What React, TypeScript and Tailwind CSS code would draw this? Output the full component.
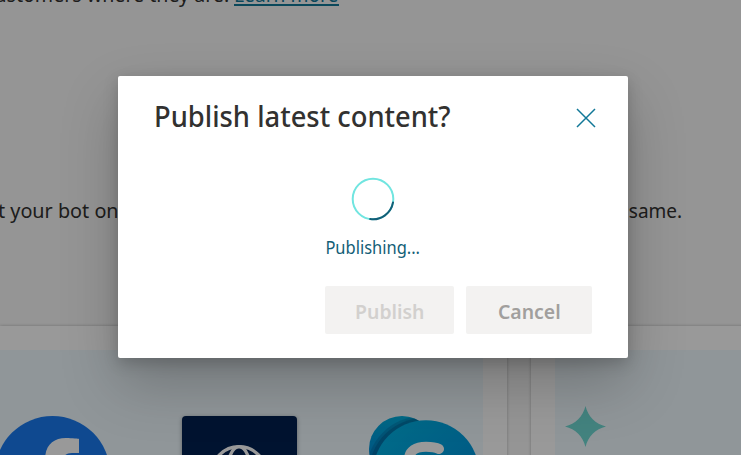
import React from 'react';

function FacebookLogo() {
  return (
    <svg className="size-[115px] shrink-0" viewBox="0 0 115 115">
      <circle cx="57.5" cy="57.5" r="57.5" fill="#197af0" />
      <path d="M50 115V74H35V57h15V44c0-14.500 8-22 21-22 6 0 13 .9 13 .9V37h-7c-7 0-9.500 4-9.500 9v11h16l-2.500 17H67.500v41z" fill="#fff" />
    </svg>
  );
}

function GlobeTile() {
  return (
    <div className="flex size-[115px] shrink-0 items-center justify-center rounded-[4px] bg-[#002050] shadow-[0_1px_4px_rgba(0,0,0,0.35)]">
      <svg className="size-[58px]" viewBox="0 0 58 58" fill="none" stroke="#fff" strokeWidth="3.300">
        <circle cx="29" cy="29" r="27.300" />
        <ellipse cx="29" cy="29" rx="12" ry="27.300" />
        <path d="M3.500 19h51M3.500 39h51M9 9l9 10M49 9l-9 10" />
      </svg>
    </div>
  );
}

function SkypeLogo() {
  return (
    <svg className="size-[115px] shrink-0" viewBox="0 0 115 115">
      <defs>
        <linearGradient id="sk-back" x1="0" y1="0" x2="0" y2="1">
          <stop offset="0" stopColor="#00b0e0" />
          <stop offset="1" stopColor="#0078d4" />
        </linearGradient>
        <linearGradient id="sk-front" x1="0" y1="0" x2="1" y2="1">
          <stop offset="0" stopColor="#00b7e6" />
          <stop offset="1" stopColor="#0088d8" />
        </linearGradient>
        <clipPath id="sk-clip">
          <circle cx="33" cy="33" r="33" />
        </clipPath>
      </defs>
      <circle cx="33" cy="33" r="33" fill="url(#sk-back)" />
      <g clipPath="url(#sk-clip)">
        <circle cx="54" cy="57" r="57" fill="#004f80" opacity=".25" />
        <circle cx="55" cy="57" r="55" fill="#004f80" opacity=".35" />
      </g>
      <circle cx="57" cy="57.300" r="53" fill="url(#sk-front)" />
      <path
        d="M70 33c-3-1.600-7-2.300-13-2.300-10 0-17 4.500-17 12.500 0 17 33 10 33 23 0 6-7 9-16 9-6 0-11-1-17-2.500"
        fill="none"
        stroke="#fff"
        strokeWidth="10"
        strokeLinecap="round"
      />
    </svg>
  );
}

function Spinner() {
  return (
    <svg className="size-[44px]" viewBox="0 0 44 44" fill="none" strokeWidth="2">
      <circle cx="22" cy="22" r="20.300" stroke="#71e5e0" />
      <path d="M42 25.400A20.300 20.300 0 0 1 19.200 42.100" stroke="#135e77" strokeLinecap="round" />
    </svg>
  );
}

function Channels() {
  return (
    <div className="flex gap-6">
      <section className="h-[200px] w-[507px] bg-white pr-6 pt-6 shadow-[0_0_3px_rgba(0,0,0,0.25)]">
        <div className="h-full bg-[#f0faff] pt-[66px]">
          <div className="-ml-[5.500px] flex gap-[72px]">
            <FacebookLogo />
            <GlobeTile />
            <SkypeLogo />
          </div>
        </div>
      </section>
      <section className="h-[200px] w-[260px] shrink-0 bg-white pl-6 pt-6 shadow-[0_0_3px_rgba(0,0,0,0.25)]">
        <div className="h-full bg-[#f0faff] pl-[10px] pt-[56px]">
          <svg className="size-[41px]" viewBox="0 0 41 41">
            <path d="M20.500 0C23 10.500 30.500 18 41 20.500 30.500 23 23 30.500 20.500 41 18 30.500 10.500 23 0 20.500 10.500 18 18 10.500 20.500 0z" fill="#70dad4" />
          </svg>
        </div>
      </section>
    </div>
  );
}

function PublishDialog() {
  return (
    <div
      role="dialog"
      className="ml-[118px] flex h-[282px] w-[510px] flex-col rounded-[2px] bg-white px-9 pb-6 shadow-[0_25.6px_57.6px_rgba(0,0,0,0.22),0_4.8px_14.4px_rgba(0,0,0,0.18)]"
    >
      <header className="flex h-[84px] items-center justify-between">
        <h1 className="origin-left scale-x-[0.977] whitespace-nowrap pb-[3px] text-[28px] font-medium leading-[81px] text-[#323130]">
          Publish latest content?
        </h1>
        <button aria-label="Close" className="-mr-[5px] p-px">
          <svg className="size-5" viewBox="0 0 20 20" stroke="#117898" strokeWidth="1.500">
            <path d="M1 1l18 18M19 1L1 19" />
          </svg>
        </button>
      </header>
      <div className="mt-[17px] flex flex-col items-center">
        <Spinner />
        <p className="mt-3 origin-center scale-x-[0.915] whitespace-nowrap text-[18px] leading-[28px] text-[#135e77]">Publishing...</p>
      </div>
      <footer className="mt-auto flex justify-end gap-3 text-[20px] font-semibold">
        <button className="h-12 w-[129px] rounded-[2px] bg-[#f3f2f1] pt-[3px] text-[#d2d0ce]">
          <span className="inline-block scale-x-[0.97]">Publish</span>
        </button>
        <button className="h-12 w-[126px] rounded-[2px] bg-[#f3f2f1] pt-[3px] text-[#a19f9d]">
          <span className="inline-block scale-x-[0.97]">Cancel</span>
        </button>
      </footer>
    </div>
  );
}

export default function App() {
  return (
    <div className="relative h-[455px] w-[741px] overflow-hidden bg-[#f8f8f8] font-['Noto_Sans',sans-serif]">
      <div className="flex h-[326px] flex-col text-[20px] leading-7 text-[#323130]">
        <div className="-mt-[19px] flex whitespace-nowrap">
          <p className="-ml-[15px] w-[249px]"><span className="inline-block origin-left scale-x-[0.98]">customers where they are.</span></p>
          <a className="h-[25px] w-[105px] border-b-2 border-[#117898] text-[#117898]"><span className="inline-block origin-left scale-x-[0.96]">Learn more</span></a>
        </div>
        <div className="mt-[188px] flex justify-between whitespace-nowrap pr-[59px]">
          <p className="-ml-[2px] w-[121px]"><span className="inline-block origin-left scale-x-[0.99]">t your bot on</span></p>
          <p className="origin-right scale-x-[0.95]">same.</p>
        </div>
      </div>
      <Channels />
      <div className="absolute inset-0 bg-black/40 pt-[76px]">
        <PublishDialog />
      </div>
    </div>
  );
}
